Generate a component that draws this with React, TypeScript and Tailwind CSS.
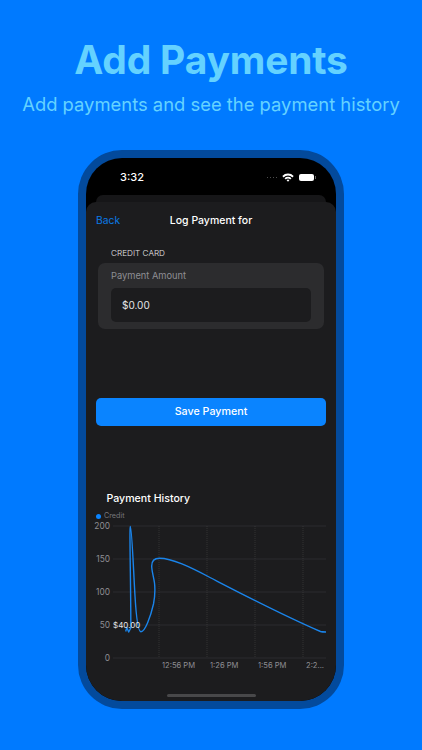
export default function App() {
  const font = { fontFamily: "Inter, 'Liberation Sans', sans-serif" };
  const grid = [525, 558, 591, 624, 657];
  const labels = ["200", "150", "100", "50", "0"];
  return (
    <div style={font} className="w-[422px] h-[750px] bg-[#007aff] overflow-hidden flex flex-col items-center">
      <h1 className="mt-[36px] h-[48px] leading-[48px] text-[39px] font-bold text-[#64d2ff] tracking-[-0.2px] whitespace-nowrap">Add Payments</h1>
      <p className="mt-[8px] h-[24px] leading-[24px] text-[18.4px] text-[#64d2ff] whitespace-nowrap">Add payments and see the payment history</p>
      <div className="mt-[34px] w-[266px] h-[559px] shrink-0 rounded-[44px] bg-[#034a9c] p-[8px]">
        <div className="relative w-full h-full rounded-[36px] bg-black overflow-hidden flex flex-col">
          <div className="h-[37px] shrink-0 flex items-center justify-between pl-[34px] pr-[20px] pt-[2px]">
            <span className="text-[11px] font-medium text-white">3:32</span>
            <div className="flex items-center gap-[4px]">
              <div className="flex gap-[1.5px]">
                {[0, 1, 2, 3].map((i) => (
                  <span key={i} className="w-[1.5px] h-[1.5px] rounded-full bg-[#666]" />
                ))}
              </div>
              <svg width="12" height="9" viewBox="0 0 12 9" className="ml-[1px]">
                <path d="M0.3 3 A8 8 0 0 1 11.7 3 L10.4 4.4 A6.2 6.2 0 0 0 1.6 4.4 Z" fill="#fff" />
                <path d="M2.5 5.2 A5 5 0 0 1 9.5 5.2 L8.2 6.5 A3.2 3.2 0 0 0 3.8 6.5 Z" fill="#fff" />
                <path d="M4.6 7.3 A2 2 0 0 1 7.4 7.3 L6 8.8 Z" fill="#fff" />
              </svg>
              <div className="flex items-center gap-[1px] ml-[1px]">
                <div className="w-[15px] h-[7px] rounded-[2px] bg-white" />
                <div className="w-[1px] h-[3px] bg-[#666]" />
              </div>
            </div>
          </div>
          <div className="mx-[10px] h-[7px] shrink-0 rounded-t-[8px] bg-[#161618]" />
          <div className="flex-1 rounded-t-[10px] bg-[#1c1c1e] flex flex-col">
            <div className="relative h-[36px] flex items-center justify-center pt-[2px]">
              <span className="absolute left-[10px] text-[10.3px] text-[#0a7ae6]">Back</span>
              <span className="text-[10.5px] font-medium text-white">Log Payment for</span>
            </div>
            <div className="mt-[8px] pl-[25px] h-[14px] leading-[14px] text-[8.2px] font-light text-[#e5e5e7]">CREDIT CARD</div>
            <div className="mt-[3px] mx-[12px] h-[66px] rounded-[7px] bg-[#2c2c2e] px-[13px] pt-[6px]">
              <div className="h-[14px] leading-[14px] text-[9.3px] text-[#8e8e93]">Payment Amount</div>
              <div className="mt-[5px] h-[34px] rounded-[5px] bg-[#1c1c1e] flex items-center pl-[11px] text-[10px] text-[#e5e5e7]">$0.00</div>
            </div>
            <div className="mt-[69px] mx-[10px] h-[28px] rounded-[5px] bg-[#0a84ff] flex items-center justify-center pt-[1px] text-[10.7px] font-medium text-white">Save Payment</div>
            <div className="mt-[64px] pl-[20.5px] h-[18px] leading-[18px] text-[10.6px] font-medium text-white">Payment History</div>
            <div className="mt-[3px] pl-[10px] h-[10px] flex items-center gap-[3px]">
              <span className="w-[5px] h-[5px] rounded-full bg-[#0a84ff]" />
              <span className="text-[7.2px] text-[#77777c]">Credit</span>
            </div>
            <svg width="250" height="165" viewBox="86 520 250 165" className="block">
              {grid.map((y) => (
                <line key={y} x1="113" x2="326" y1={y} y2={y} stroke="#38383a" strokeWidth="0.6" />
              ))}
              {[159, 207, 255, 303].map((x) => (
                <line key={x} x1={x} x2={x} y1="525" y2="657" stroke="#48484a" strokeWidth="0.5" strokeDasharray="1 1" />
              ))}
              {grid.map((y, i) => (
                <text key={y} x="110" y={y + 3} textAnchor="end" fontSize="8.4" fill="#8e8e93">{labels[i]}</text>
              ))}
              <path
                d="M125.7 630.5 L126.8 626.5 L128.7 631 L130.8 627 C131 590 129.2 525.5 130.4 525.5 C131.8 525.5 133.5 570 135 595 C136 612 137.5 630.8 141 630.8 C145 630.8 150.5 616 153.5 603 C155 595 155.2 588 154.5 582 C153.5 575 151.7 570 151.7 565 C151.7 559 155 557.3 159.5 557.3 C172 557.3 190 566 210 576.5 C240 592 280 613 320.5 630.5 C322 631 324 631 326 631"
                fill="none"
                stroke="#1a84ea"
                strokeWidth="1.4"
                strokeLinejoin="round"
              />
              <text x="113" y="627" fontSize="8" fill="#e5e5e7">$40.00</text>
              {[["12:56 PM", 162], ["1:26 PM", 210], ["1:56 PM", 258], ["2:2...", 306]].map(([t, x]) => (
                <text key={t as string} x={x as number} y="667" fontSize="7.6" fill="#8e8e93">{t}</text>
              ))}
            </svg>
            <div className="mt-[8px] mx-auto w-[89px] h-[3px] rounded-full bg-[#48484a]" />
          </div>
        </div>
      </div>
    </div>
  );
}
